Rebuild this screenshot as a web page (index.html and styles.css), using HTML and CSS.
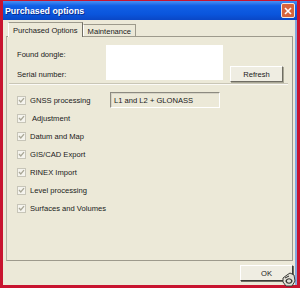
FILE: index.html
```html
<!DOCTYPE html>
<html lang="en">
<head>
  <meta charset="UTF-8">
  <title>Purchased options</title>
  <link rel="stylesheet" href="styles.css">
</head>
<body>
  <div class="frame">
    <div class="titlebar">
      <span class="title">Purchased options</span>
      <div class="close">
        <svg width="8" height="8" viewBox="0 0 8 8"><path d="M1 1 L7 7 M7 1 L1 7" stroke="#ffffff" stroke-width="1.6"/></svg>
      </div>
    </div>

    <div class="window-body">
      <div class="tabs">
        <div class="tab active">Purchased Options</div>
        <div class="tab">Maintenance</div>
      </div>

      <div class="panel">
        <div class="dongle">
          <div class="labels">
            <span>Found dongle:</span>
            <span>Serial number:</span>
          </div>
          <div class="dongle-box"></div>
          <button class="btn refresh">Refresh</button>
        </div>

        <div class="sep"></div>

        <div class="options">
          <div class="opt">
            <span class="check"><svg width="9" height="9" viewBox="0 0 9 9"><path d="M2 4 L3.8 6 L7 2.2" fill="none" stroke="#a9a796" stroke-width="1.3"/></svg></span>
            <span class="opt-label wide">GNSS processing</span>
            <span class="field">L1 and L2 + GLONASS</span>
          </div>
          <div class="opt">
            <span class="check"><svg width="9" height="9" viewBox="0 0 9 9"><path d="M2 4 L3.8 6 L7 2.2" fill="none" stroke="#a9a796" stroke-width="1.3"/></svg></span>
            <span class="opt-label indent">Adjustment</span>
          </div>
          <div class="opt">
            <span class="check"><svg width="9" height="9" viewBox="0 0 9 9"><path d="M2 4 L3.8 6 L7 2.2" fill="none" stroke="#a9a796" stroke-width="1.3"/></svg></span>
            <span class="opt-label">Datum and Map</span>
          </div>
          <div class="opt">
            <span class="check"><svg width="9" height="9" viewBox="0 0 9 9"><path d="M2 4 L3.8 6 L7 2.2" fill="none" stroke="#a9a796" stroke-width="1.3"/></svg></span>
            <span class="opt-label">GIS/CAD Export</span>
          </div>
          <div class="opt">
            <span class="check"><svg width="9" height="9" viewBox="0 0 9 9"><path d="M2 4 L3.8 6 L7 2.2" fill="none" stroke="#a9a796" stroke-width="1.3"/></svg></span>
            <span class="opt-label">RINEX Import</span>
          </div>
          <div class="opt">
            <span class="check"><svg width="9" height="9" viewBox="0 0 9 9"><path d="M2 4 L3.8 6 L7 2.2" fill="none" stroke="#a9a796" stroke-width="1.3"/></svg></span>
            <span class="opt-label">Level processing</span>
          </div>
          <div class="opt">
            <span class="check"><svg width="9" height="9" viewBox="0 0 9 9"><path d="M2 4 L3.8 6 L7 2.2" fill="none" stroke="#a9a796" stroke-width="1.3"/></svg></span>
            <span class="opt-label">Surfaces and Volumes</span>
          </div>
        </div>
      </div>

      <div class="footer">
        <button class="btn ok">OK</button>
      </div>
    </div>

    <!-- little camera watermark in the corner -->
    <svg class="mark" width="14" height="15" viewBox="0 0 14 15">
      <path d="M1 6 L5 3 L8 1 L12 3 L13 9 L10 14 L4 14 L1 10 Z" fill="#e2e0d6" stroke="#3a3a36" stroke-width="1"/>
      <path d="M4 9 C5 6 9 6 10 9 C9 12 5 12 4 9 Z" fill="none" stroke="#2a2a28" stroke-width="1.2"/>
      <path d="M3 6 L7 4" stroke="#2a2a28" stroke-width="1"/>
    </svg>
  </div>
</body>
</html>
```

FILE: styles.css
```css
* {
  box-sizing: border-box;
}

body {
  margin: 0;
  width: 300px;
  height: 288px;
  overflow: hidden;
  font-family: "Liberation Sans", Arial, sans-serif;
  font-size: 7.6px;
  color: #1a1a1a;
}

.frame {
  position: relative;
  width: 300px;
  height: 288px;
  border-style: solid;
  border-color: #c8142f;
  border-width: 1px 3px 3px 3px;
  display: flex;
  flex-direction: column;
  background: #ece9d8;
}

.titlebar {
  height: 19px;
  display: flex;
  align-items: center;
  justify-content: space-between;
  padding: 0 2px 0 2px;
  background: linear-gradient(#4a90f2, #1160e6 25%, #0a55dc 70%, #0a47c6);
}

.title {
  color: #fff;
  font-weight: bold;
  font-size: 8.8px;
  text-shadow: 1px 1px 0 #0b2d8e;
}

.close {
  width: 14px;
  height: 15px;
  border: 1px solid #f0e8e4;
  border-radius: 2px;
  background: #d8643c;
  display: flex;
  align-items: center;
  justify-content: center;
}

.window-body {
  flex: 1;
  display: flex;
  flex-direction: column;
  padding: 2px 2px 4px 3px;
  border-right: 2px solid #86a6dc;
}

.tabs {
  display: flex;
  height: 15px;
  margin-bottom: -1px;
  padding-left: 2px;
  align-items: flex-end;
}

.tab {
  height: 13px;
  padding: 0 4px;
  display: flex;
  align-items: center;
  border: 1px solid #9d9a8c;
  border-bottom: none;
  border-left-color: #fff;
  background: #ece9d8;
}

.tab.active {
  height: 15px;
  padding-top: 1px;
  position: relative;
  z-index: 1;
  border-right-color: #716f64;
}

.panel {
  flex: 1;
  border: 1px solid #9d9a8c;
  border-left-color: #b5b2a4;
  padding: 8px 2px 0 10px;
}

.dongle {
  display: flex;
  align-items: flex-start;
}

.labels {
  width: 89px;
  display: flex;
  flex-direction: column;
  gap: 8px;
  padding-top: 4px;
  line-height: 12px;
}

.dongle-box {
  width: 117px;
  height: 35px;
  background: #fff;
}

.btn {
  font-family: "Liberation Sans", Arial, sans-serif;
  font-size: 7.6px;
  color: #1a1a1a;
  width: 53px;
  height: 16px;
  padding: 0;
  background: #efede2;
  border: 1px solid;
  border-color: #fff #6f6d63 #6f6d63 #fff;
  box-shadow: 1px 1px 0 #a9a796;
}

.refresh {
  margin: 21px 0 0 7px;
}

.sep {
  height: 2px;
  margin: 1px 2px 0 -8px;
  border-top: 1px solid #c9c6b6;
  border-bottom: 1px solid #fbfaf6;
}

.options {
  margin-top: 6px;
}

.opt {
  height: 18px;
  display: flex;
  align-items: center;
}

.check {
  width: 9px;
  height: 9px;
  margin-right: 4px;
  border: 1px solid #c7c5b8;
  background: #f5f4ee;
  display: flex;
}

.check svg {
  margin: -1px;
}

.opt-label.wide {
  width: 80px;
}

.opt-label.indent {
  margin-left: 2px;
}

.field {
  width: 110px;
  height: 16px;
  padding-left: 3px;
  display: flex;
  align-items: center;
  border: 1px solid;
  border-color: #8c8a80 #fff #fff #8c8a80;
  box-shadow: inset 1px 1px 0 #d6d3c5;
}

.footer {
  display: flex;
  justify-content: flex-end;
  margin-top: 4px;
}

.ok {
  border-color: #fff #3c3b36 #3c3b36 #fff;
  box-shadow: 1px 1px 0 #6f6d63;
}

.mark {
  position: absolute;
  right: 1px;
  bottom: -2px;
}
```
